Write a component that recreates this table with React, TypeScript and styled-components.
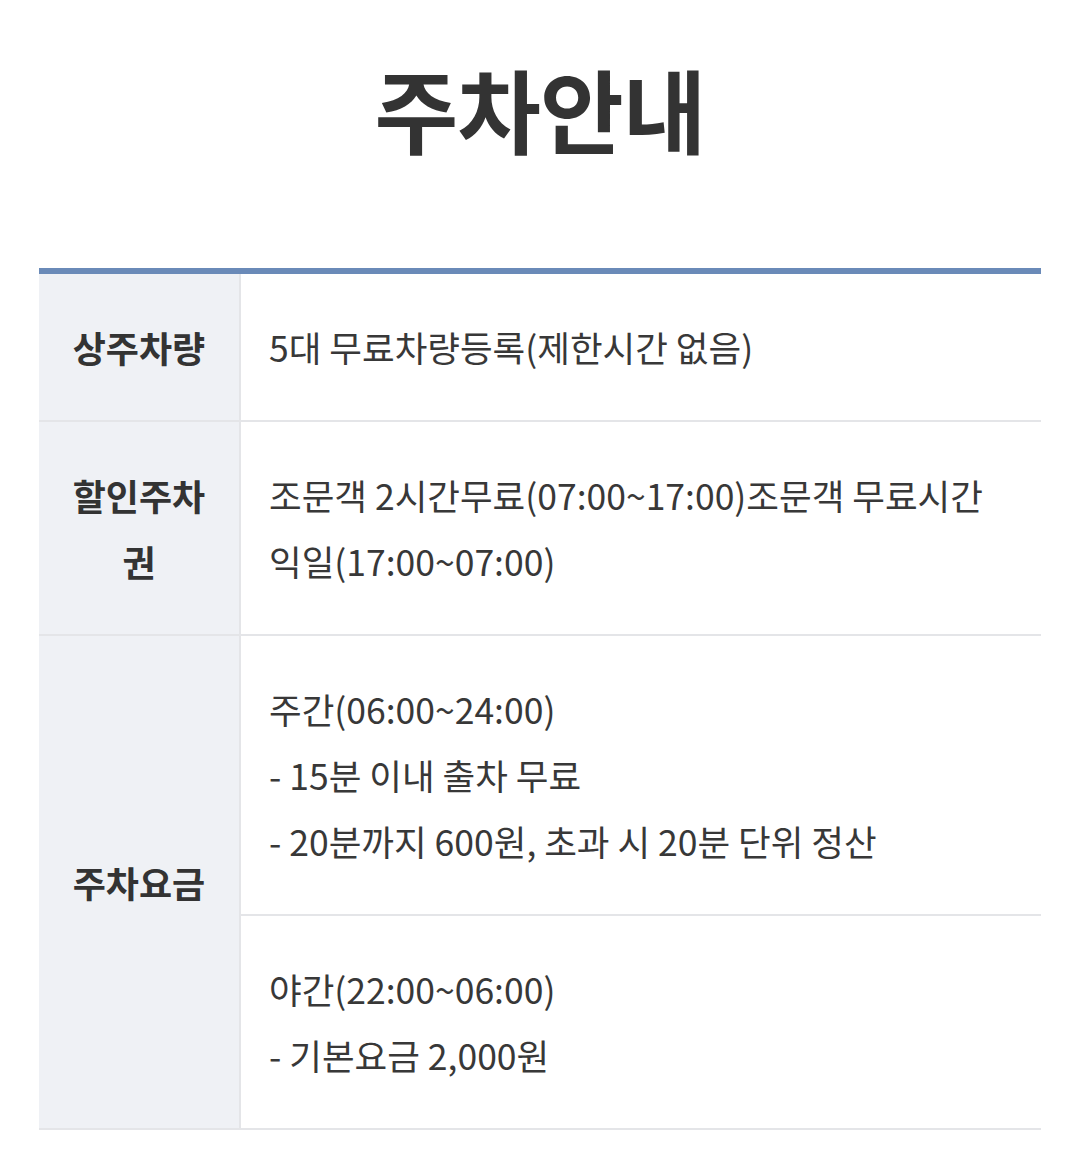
import React from 'react';
import styled, { createGlobalStyle } from 'styled-components';

const GlobalStyle = createGlobalStyle`
  body {
    margin: 0;
    background: #ffffff;
    font-family: 'Noto Sans CJK KR', 'Noto Sans', sans-serif;
    color: #333333;
  }
`;

type Row = {
  label: string;
  parts: string[][];
};

const rows: Row[] = [
  { label: '상주차량', parts: [['5대 무료차량등록(제한시간 없음)']] },
  {
    label: '할인주차권',
    parts: [['조문객 2시간무료(07:00~17:00)조문객 무료시간', '익일(17:00~07:00)']],
  },
  {
    label: '주차요금',
    parts: [
      ['주간(06:00~24:00)', '- 15분 이내 출차 무료', '- 20분까지 600원, 초과 시 20분 단위 정산'],
      ['야간(22:00~06:00)', '- 기본요금 2,000원'],
    ],
  },
];

const App: React.FC = () => {
  return (
    <Page>
      <GlobalStyle />
      <Title>주차안내</Title>
      <Table>
        <tbody>
          {rows.map((row) =>
            row.parts.map((lines, i) => (
              <tr key={row.label + i}>
                {i === 0 && <Th rowSpan={row.parts.length}>{row.label}</Th>}
                <Td>
                  {lines.map((line, j) => (
                    <Line key={j}>{line}</Line>
                  ))}
                </Td>
              </tr>
            ))
          )}
        </tbody>
      </Table>
    </Page>
  );
};

const Page = styled.div`
  padding: 0 38px 40px 39px;
`;

const Title = styled.h1`
  margin: 0;
  padding-top: 45px;
  height: 218px;
  box-sizing: border-box;
  text-align: center;
  font-size: 91px;
  line-height: 124px;
  font-weight: 700;
  color: #333333;
  letter-spacing: -1px;
`;

const Table = styled.table`
  width: 100%;
  border-collapse: collapse;
  border-top: 6px solid #6a8ab8;
  margin-top: 50px;
`;

const Th = styled.th`
  width: 201px;
  box-sizing: border-box;
  padding: 40px 18px;
  background: #eff1f5;
  border-bottom: 2px solid #e4e5e8;
  border-right: 2px solid #e4e5e8;
  font-size: 36px;
  line-height: 66px;
  font-weight: 700;
  color: #333333;
  text-align: center;
  vertical-align: middle;
`;

const Td = styled.td`
  padding: 40px 28px;
  border-bottom: 2px solid #e4e5e8;
  font-size: 35.5px;
  line-height: 66px;
  font-weight: 400;
  color: #383838;
  text-align: left;
  vertical-align: middle;
`;

const Line = styled.div`
  white-space: nowrap;
`;

export default App;
